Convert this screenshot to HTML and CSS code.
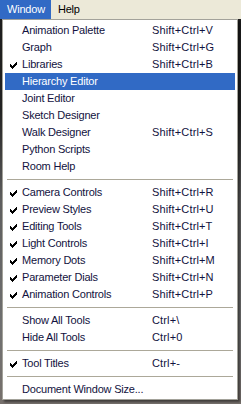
FILE: index.html
```html
<!DOCTYPE html>
<html>
<head>
<meta charset="utf-8">
<link rel="stylesheet" href="styles.css">
</head>
<body>
<div class="menubar">
  <span class="mb-item active">Window</span>
  <span class="mb-item">Help</span>
</div>
<div class="menu">
  <div class="item"><span class="check"></span><span class="label">Animation Palette</span><span class="key">Shift+Ctrl+V</span></div>
  <div class="item"><span class="check"></span><span class="label">Graph</span><span class="key">Shift+Ctrl+G</span></div>
  <div class="item"><span class="check"><svg width="7" height="7" viewBox="0 0 7 7"><path d="M0 2h1v1h1v1h1V3h1V2h1V1h1V0h1v3H6v1H5v1H4v1H3v1H2V6H1V5H0z"/></svg></span><span class="label">Libraries</span><span class="key">Shift+Ctrl+B</span></div>
  <div class="item hot"><span class="check"></span><span class="label">Hierarchy Editor</span><span class="key"></span></div>
  <div class="item"><span class="check"></span><span class="label">Joint Editor</span><span class="key"></span></div>
  <div class="item"><span class="check"></span><span class="label">Sketch Designer</span><span class="key"></span></div>
  <div class="item"><span class="check"></span><span class="label">Walk Designer</span><span class="key">Shift+Ctrl+S</span></div>
  <div class="item"><span class="check"></span><span class="label">Python Scripts</span><span class="key"></span></div>
  <div class="item"><span class="check"></span><span class="label">Room Help</span><span class="key"></span></div>
  <div class="sep"></div>
  <div class="item"><span class="check"><svg width="7" height="7" viewBox="0 0 7 7"><path d="M0 2h1v1h1v1h1V3h1V2h1V1h1V0h1v3H6v1H5v1H4v1H3v1H2V6H1V5H0z"/></svg></span><span class="label">Camera Controls</span><span class="key">Shift+Ctrl+R</span></div>
  <div class="item"><span class="check"><svg width="7" height="7" viewBox="0 0 7 7"><path d="M0 2h1v1h1v1h1V3h1V2h1V1h1V0h1v3H6v1H5v1H4v1H3v1H2V6H1V5H0z"/></svg></span><span class="label">Preview Styles</span><span class="key">Shift+Ctrl+U</span></div>
  <div class="item"><span class="check"><svg width="7" height="7" viewBox="0 0 7 7"><path d="M0 2h1v1h1v1h1V3h1V2h1V1h1V0h1v3H6v1H5v1H4v1H3v1H2V6H1V5H0z"/></svg></span><span class="label">Editing Tools</span><span class="key">Shift+Ctrl+T</span></div>
  <div class="item"><span class="check"><svg width="7" height="7" viewBox="0 0 7 7"><path d="M0 2h1v1h1v1h1V3h1V2h1V1h1V0h1v3H6v1H5v1H4v1H3v1H2V6H1V5H0z"/></svg></span><span class="label">Light Controls</span><span class="key">Shift+Ctrl+I</span></div>
  <div class="item"><span class="check"><svg width="7" height="7" viewBox="0 0 7 7"><path d="M0 2h1v1h1v1h1V3h1V2h1V1h1V0h1v3H6v1H5v1H4v1H3v1H2V6H1V5H0z"/></svg></span><span class="label">Memory Dots</span><span class="key">Shift+Ctrl+M</span></div>
  <div class="item"><span class="check"><svg width="7" height="7" viewBox="0 0 7 7"><path d="M0 2h1v1h1v1h1V3h1V2h1V1h1V0h1v3H6v1H5v1H4v1H3v1H2V6H1V5H0z"/></svg></span><span class="label">Parameter Dials</span><span class="key">Shift+Ctrl+N</span></div>
  <div class="item"><span class="check"><svg width="7" height="7" viewBox="0 0 7 7"><path d="M0 2h1v1h1v1h1V3h1V2h1V1h1V0h1v3H6v1H5v1H4v1H3v1H2V6H1V5H0z"/></svg></span><span class="label">Animation Controls</span><span class="key">Shift+Ctrl+P</span></div>
  <div class="sep"></div>
  <div class="item"><span class="check"></span><span class="label">Show All Tools</span><span class="key">Ctrl+\</span></div>
  <div class="item"><span class="check"></span><span class="label">Hide All Tools</span><span class="key">Ctrl+0</span></div>
  <div class="sep"></div>
  <div class="item"><span class="check"><svg width="7" height="7" viewBox="0 0 7 7"><path d="M0 2h1v1h1v1h1V3h1V2h1V1h1V0h1v3H6v1H5v1H4v1H3v1H2V6H1V5H0z"/></svg></span><span class="label">Tool Titles</span><span class="key">Ctrl+-</span></div>
  <div class="sep"></div>
  <div class="item"><span class="check"></span><span class="label">Document Window Size...</span><span class="key"></span></div>
</div>
</body>
</html>
```
FILE: styles.css
```css
html, body {
  margin: 0;
  padding: 0;
}
body {
  width: 241px;
  height: 404px;
  overflow: hidden;
  background: linear-gradient(to bottom, #1c1c1c 0px, #222 110px, #5e5e5e 200px, #707070 330px, #76706c 404px);
  font-family: "Liberation Sans", Arial, sans-serif;
  font-size: 11px;
  letter-spacing: -0.2px;
  color: #121240;
}
.menubar {
  height: 19px;
  background: #ece9d8;
  display: flex;
  align-items: stretch;
}
.mb-item {
  display: flex;
  align-items: center;
  padding: 0 6px 1px 7px;
  color: #000;
}
.mb-item.active {
  background: #316ac5;
  color: #fff;
}
.menu {
  margin-left: 2px;
  width: 236px;
  box-sizing: border-box;
  border: 1px solid #a3a29a;
  padding: 2px 2px 1px 2px;
  background: #fff;
  box-shadow: 2px 2px 2px rgba(0, 0, 0, 0.45);
}
.item {
  height: 17px;
  display: grid;
  grid-template-columns: 17px 130px 1fr;
  align-items: center;
  white-space: nowrap;
}
.item.hot {
  background: #316ac5;
  color: #fff;
}
.check {
  display: flex;
  align-items: center;
  padding-left: 5px;
  height: 17px;
}
.check svg {
  display: block;
  fill: #000;
  margin-top: 1px;
}
.label, .key {
  line-height: 17px;
}
.key {
  letter-spacing: 0.15px;
}
.sep {
  height: 9px;
  display: flex;
  align-items: center;
  padding: 0 2px;
}
.sep::after {
  content: "";
  flex: 1;
  height: 1px;
  background: #aca899;
}
```
